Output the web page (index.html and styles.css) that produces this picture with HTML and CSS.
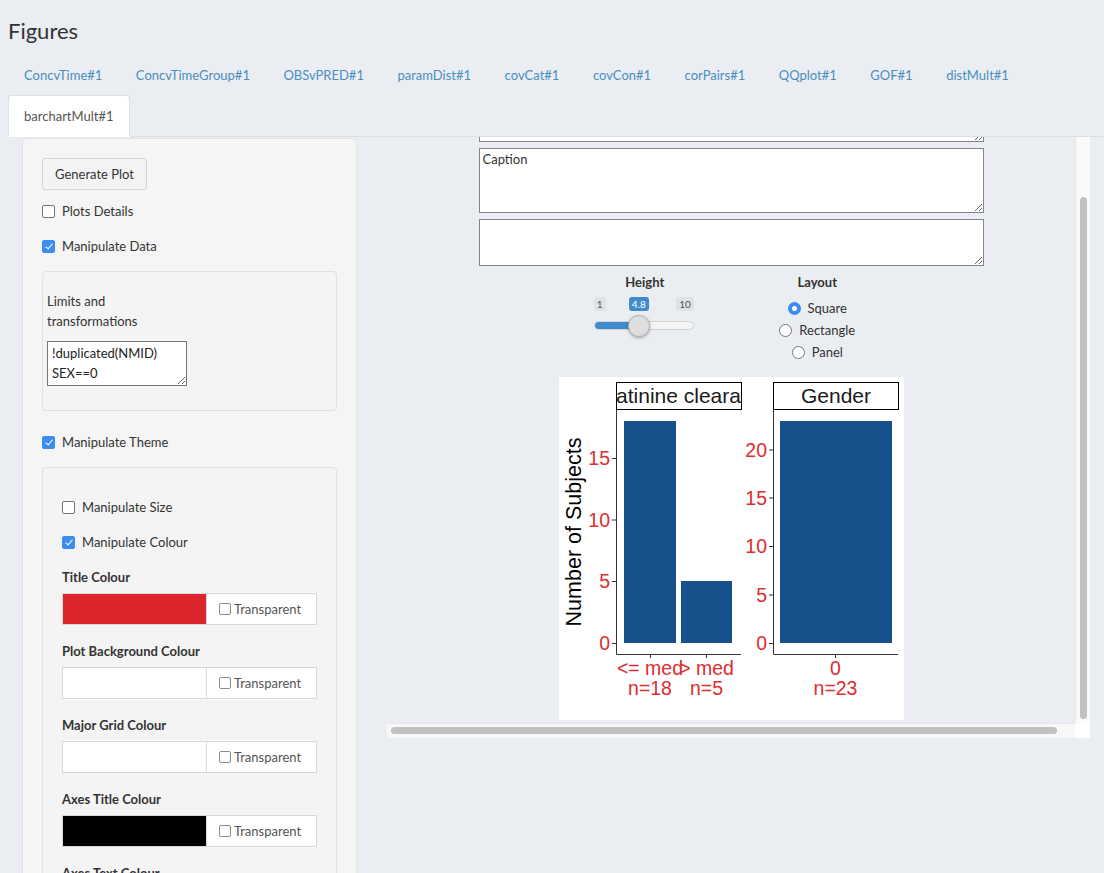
FILE: index.html
```html
<!DOCTYPE html>
<html lang="en">
<head>
<meta charset="utf-8">
<title>Figures</title>
<link rel="stylesheet" href="styles.css">
</head>
<body>
<div class="page">
  <h3 class="title">Figures</h3>
  <ul class="tabs">
    <li><a>ConcvTime#1</a></li>
    <li><a>ConcvTimeGroup#1</a></li>
    <li><a>OBSvPRED#1</a></li>
    <li><a>paramDist#1</a></li>
    <li><a>covCat#1</a></li>
    <li><a>covCon#1</a></li>
    <li><a>corPairs#1</a></li>
    <li><a>QQplot#1</a></li>
    <li><a>GOF#1</a></li>
    <li><a>distMult#1</a></li>
    <li class="break"></li>
    <li class="active"><a>barchartMult#1</a></li>
  </ul>

  <div class="content">
    <aside class="well side">
      <button class="btn">Generate Plot</button>
      <label class="check"><span class="cb"></span>Plots Details</label>
      <label class="check"><span class="cb on"></span>Manipulate Data</label>
      <div class="inner inner-data">
        <div class="lbl">Limits and<br>transformations</div>
        <textarea class="expr">!duplicated(NMID)
SEX==0</textarea>
      </div>
      <label class="check"><span class="cb on"></span>Manipulate Theme</label>
      <div class="inner inner-theme">
        <label class="check"><span class="cb"></span>Manipulate Size</label>
        <label class="check"><span class="cb on"></span>Manipulate Colour</label>
        <div class="field">
          <div class="flabel">Title Colour</div>
          <div class="colour"><span class="swatch red"></span><span class="addon"><span class="cb sm"></span>Transparent</span></div>
        </div>
        <div class="field">
          <div class="flabel">Plot Background Colour</div>
          <div class="colour"><span class="swatch"></span><span class="addon"><span class="cb sm"></span>Transparent</span></div>
        </div>
        <div class="field">
          <div class="flabel">Major Grid Colour</div>
          <div class="colour"><span class="swatch"></span><span class="addon"><span class="cb sm"></span>Transparent</span></div>
        </div>
        <div class="field">
          <div class="flabel">Axes Title Colour</div>
          <div class="colour"><span class="swatch black"></span><span class="addon"><span class="cb sm"></span>Transparent</span></div>
        </div>
        <div class="field">
          <div class="flabel">Axes Text Colour</div>
          <div class="colour"><span class="swatch red"></span><span class="addon"><span class="cb sm"></span>Transparent</span></div>
        </div>
      </div>
    </aside>

    <section class="viewer">
      <div class="scroll-area">
        <div class="scroll-inner">
          <textarea class="ta short"></textarea>
          <textarea class="ta tall">Caption</textarea>
          <textarea class="ta short"></textarea>

          <div class="controls">
            <div class="ctl">
              <div class="ctl-label">Height</div>
              <div class="slider">
                <span class="sl-min">1</span>
                <span class="sl-max">10</span>
                <span class="sl-val" style="left:45px">4.8</span>
                <span class="sl-track"><span class="sl-fill" style="width:45px"></span></span>
                <span class="sl-handle" style="left:34px"></span>
              </div>
            </div>
            <div class="ctl">
              <div class="ctl-label">Layout</div>
              <div class="radios">
                <label class="radio"><span class="rb on"></span>Square</label>
                <label class="radio"><span class="rb"></span>Rectangle</label>
                <label class="radio"><span class="rb"></span>Panel</label>
              </div>
            </div>
          </div>

          <div class="plot">
            <svg class="chart" width="345" height="343" viewBox="0 0 345 343">
              <defs>
                <clipPath id="strip1"><rect x="57" y="5" width="125" height="27"/></clipPath>
              </defs>
              <!-- y axis title -->
              <text class="axtitle" transform="translate(22,155) rotate(-90)" text-anchor="middle">Number of Subjects</text>

              <!-- panel 1 -->
              <rect x="57.5" y="5.5" width="125" height="27" class="strip"/>
              <text class="striptxt" x="119.5" y="26" text-anchor="middle" clip-path="url(#strip1)">Creatinine clearance</text>
              <rect x="65" y="44" width="52" height="222" class="bar"/>
              <rect x="122" y="204" width="51" height="62" class="bar"/>
              <path class="axis" d="M57.5 32 V277.5 H182"/>
              <path class="axis" d="M53 266.5 H57 M53 204.5 H57 M53 143 H57 M53 81.5 H57 M91.5 277.5 V281 M147.5 277.5 V281"/>
              <g class="tick" text-anchor="end">
                <text x="51" y="273">0</text>
                <text x="51" y="211">5</text>
                <text x="51" y="150">10</text>
                <text x="51" y="88">15</text>
              </g>
              <g class="tick" text-anchor="middle">
                <text x="91" y="298">&lt;= med</text>
                <text x="91" y="318">n=18</text>
                <text x="147.5" y="298">&gt; med</text>
                <text x="147.5" y="318">n=5</text>
              </g>

              <!-- panel 2 -->
              <rect x="214.5" y="5.5" width="125" height="27" class="strip"/>
              <text class="striptxt" x="277" y="26" text-anchor="middle">Gender</text>
              <rect x="221" y="44" width="112" height="222" class="bar"/>
              <path class="axis" d="M214.5 32 V277.5 H339"/>
              <path class="axis" d="M210 266.5 H214 M210 218 H214 M210 169.5 H214 M210 121 H214 M210 73 H214 M276.5 277.5 V281"/>
              <g class="tick" text-anchor="end">
                <text x="208" y="273">0</text>
                <text x="208" y="225">5</text>
                <text x="208" y="176">10</text>
                <text x="208" y="128">15</text>
                <text x="208" y="80">20</text>
              </g>
              <g class="tick" text-anchor="middle">
                <text x="276.5" y="298">0</text>
                <text x="276.5" y="318">n=23</text>
              </g>
            </svg>
          </div>
        </div>
      </div>
      <div class="vtrack"><div class="vthumb"></div></div>
      <div class="htrack"><div class="hthumb"></div></div>
      <div class="corner"></div>
    </section>
  </div>
</div>
</body>
</html>
```

FILE: styles.css
```css
html, body {
  margin: 0;
  padding: 0;
  overflow: hidden;
  height: 873px;
}
body {
  background: #eaedf2;
  font-family: "Lato", "Open Sans", sans-serif;
  font-size: 13px;
  color: #333;
}
.page {
  padding: 0 8px;
}
.title {
  margin: 18px 0 10px;
  font-size: 22px;
  font-weight: 400;
  line-height: 26px;
  color: #333;
}
.tabs {
  list-style: none;
  margin: 0 -8px 0 0;
  padding: 0;
  display: flex;
  flex-wrap: wrap;
  border-bottom: 1px solid #dcdfe4;
}
.tabs li {
  margin-bottom: -1px;
}
.tabs li.break {
  flex-basis: 100%;
  height: 0;
  margin: 0;
}
.tabs a {
  display: block;
  padding: 10px 15px;
  line-height: 20px;
  margin-right: 1.5px;
  border: 1px solid transparent;
  border-radius: 4px 4px 0 0;
  color: #4a8dbf;
  font-size: 13px;
}
.tabs li.active a {
  background: #fff;
  border-color: #dcdfe4;
  border-bottom-color: transparent;
  color: #555;
}

.content {
  display: grid;
  grid-template-columns: 335px 703px;
  column-gap: 30px;
  padding-left: 14px;
  align-items: start;
}

/* left panel */
.well {
  background: #f5f5f5;
  border: 1px solid #e3e3e3;
  border-radius: 4px;
}
.side {
  margin-top: 1px;
  padding: 19px 19px 40px;
  min-height: 800px;
}
.btn {
  display: block;
  height: 32px;
  padding: 0 12px;
  background: #f3f3f3;
  border: 1px solid #d6d6d6;
  border-radius: 3px;
  font-family: inherit;
  font-size: 13px;
  color: #333;
  margin-bottom: 11px;
}
.check {
  display: flex;
  align-items: center;
  gap: 7px;
  height: 20px;
  margin-bottom: 15px;
  color: #333;
}
.cb {
  box-sizing: border-box;
  width: 13px;
  height: 13px;
  border: 1px solid #767676;
  border-radius: 2px;
  background: #fff;
  flex: none;
}
.cb.on {
  background: #3b8ef0;
  border-color: #3b8ef0;
  position: relative;
}
.cb.on::after {
  content: "";
  position: absolute;
  left: 3.5px;
  top: 1px;
  width: 3px;
  height: 6px;
  border: solid #fff;
  border-width: 0 1.6px 1.6px 0;
  transform: rotate(40deg);
}
.cb.sm {
  width: 12px;
  height: 12px;
  border-color: #8a8a8a;
}
.inner {
  background: #f4f4f4;
  border: 1px solid #e1e1e1;
  border-radius: 4px;
}
.inner-data {
  padding: 19px 4px 24px;
  margin-bottom: 21px;
}
.lbl {
  line-height: 20px;
  margin-bottom: 10px;
}
.expr {
  display: block;
  box-sizing: border-box;
  width: 140px;
  height: 45px;
  padding: 1px 4px;
  border: 1px solid #767676;
  font-family: "Lato", sans-serif;
  font-size: 13px;
  line-height: 20px;
  color: #222;
  resize: vertical;
}
.inner-theme {
  padding: 29px 19px 20px;
}
.field {
  margin-bottom: 16px;
}
.flabel {
  font-weight: 700;
  line-height: 20px;
  margin-bottom: 6px;
  color: #333;
}
.colour {
  display: flex;
  width: 255px;
  height: 32px;
  box-sizing: border-box;
  border: 1px solid #d5d9e0;
  background: #fff;
}
.swatch {
  width: 143px;
  background: #fff;
}
.swatch.red { background: #dc262c; }
.swatch.black { background: #000; }
.addon {
  flex: 1;
  display: flex;
  align-items: center;
  gap: 3px;
  padding-left: 12px;
  border-left: 1px solid #d5d9e0;
  color: #555;
  font-size: 13px;
}

/* right viewer */
.viewer {
  display: grid;
  grid-template-columns: 688px 15px;
  grid-template-rows: 586px 15px;
}
.scroll-area {
  overflow: hidden;
}
.scroll-inner {
  width: 505px;
  margin: -42px auto 0;
  display: flex;
  flex-direction: column;
  gap: 6px;
}
.ta {
  display: block;
  box-sizing: border-box;
  width: 505px;
  border: 1px solid #858585;
  padding: 2px 3px;
  font-family: "Lato", sans-serif;
  font-size: 13px;
  color: #333;
  background: #fff;
}
.ta.short { height: 47px; }
.ta.tall { height: 65px; }

.controls {
  width: 345px;
  align-self: center;
  display: grid;
  grid-template-columns: 1fr 1fr;
}
.ctl {
  display: flex;
  flex-direction: column;
  align-items: center;
}
.ctl-label {
  font-weight: 700;
  line-height: 20px;
  color: #333;
}
.slider {
  position: relative;
  width: 100px;
  height: 45px;
  margin-right: 2px;
}
.sl-min, .sl-max, .sl-val {
  position: absolute;
  top: 5px;
  height: 14px;
  line-height: 14px;
  padding: 0 3px;
  border-radius: 3px;
  font-size: 10px;
  background: #dfe2e6;
  color: #555;
}
.sl-min { left: 0; }
.sl-max { right: 0; }
.sl-val {
  background: #428bca;
  color: #fff;
  transform: translateX(-50%);
}
.sl-track {
  position: absolute;
  left: 0;
  right: 0;
  top: 29px;
  height: 9px;
  box-sizing: border-box;
  border: 1px solid #d3d3d3;
  border-radius: 5px;
  background: #f5f5f5;
  overflow: hidden;
}
.sl-fill {
  display: block;
  height: 100%;
  background: #428bca;
}
.sl-handle {
  position: absolute;
  top: 23px;
  width: 22px;
  height: 22px;
  box-sizing: border-box;
  border-radius: 50%;
  border: 1px solid #b5b5b5;
  background: #dedede;
  box-shadow: 0 1px 3px rgba(0,0,0,0.3);
}
.radios {
  margin-top: 5px;
  display: flex;
  flex-direction: column;
  align-items: center;
}
.radio {
  display: flex;
  align-items: center;
  gap: 7px;
  height: 22px;
  font-size: 13px;
  color: #333;
}
.rb {
  box-sizing: border-box;
  width: 13px;
  height: 13px;
  border-radius: 50%;
  border: 1px solid #767676;
  background: #fff;
}
.rb.on {
  border: 4px solid #3b8ef0;
  background: #fff;
}
.plot {
  align-self: center;
  width: 345px;
  height: 343px;
  margin-top: 8px;
  background: #fff;
}
.chart {
  display: block;
  font-family: "Liberation Sans", Arial, sans-serif;
}
.chart .strip { fill: #fff; stroke: #000; stroke-width: 1; }
.chart .striptxt { font-size: 21px; fill: #1a1a1a; }
.chart .axtitle { font-size: 21.5px; fill: #000; }
.chart .bar { fill: #17508a; }
.chart .axis { fill: none; stroke: #333; stroke-width: 1; }
.chart .tick text { font-size: 19.5px; fill: #de2d2f; }

.vtrack {
  background: #fafafa;
  border-left: 1px solid #e6e6e6;
  padding: 60px 3px 4px 3px;
}
.vthumb {
  width: 7px;
  height: 100%;
  margin: 0 auto;
  border-radius: 4px;
  background: #c1c1c1;
}
.htrack {
  background: #f8f8f8;
  border-top: 1px solid #e6e6e6;
  padding: 3px 18px 4px 4px;
}
.hthumb {
  height: 7px;
  border-radius: 4px;
  background: #c1c1c1;
}
.corner {
  background: #fff;
}
```
